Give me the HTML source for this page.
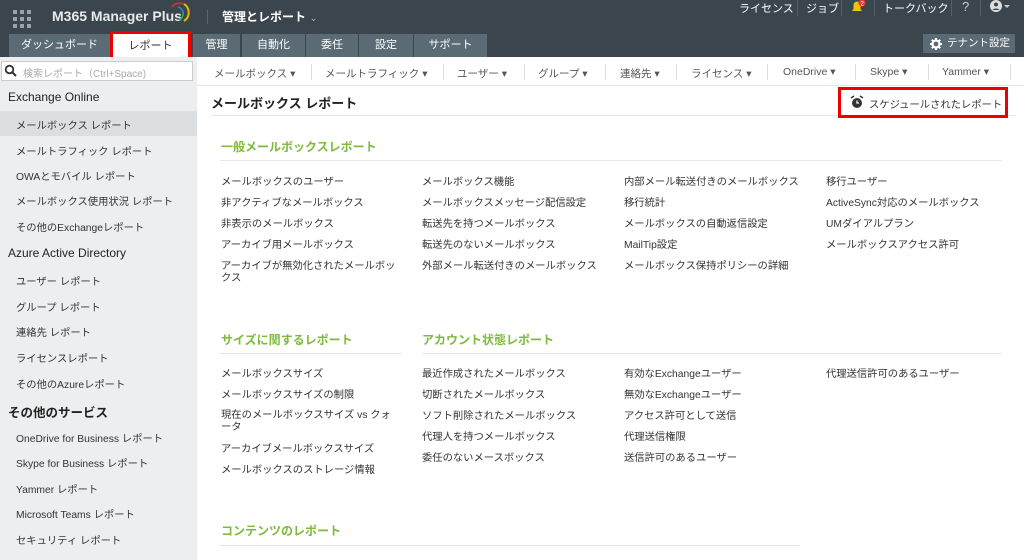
<!DOCTYPE html>
<html><head><meta charset="utf-8"><style>
*{margin:0;padding:0;box-sizing:border-box}
body{width:1024px;height:560px;overflow:hidden;background:#fff;font-family:"Liberation Sans","Noto Sans CJK JP",sans-serif;font-size:11px;color:#333;position:relative}
.a{position:absolute;white-space:nowrap}
#hdr{position:absolute;left:0;top:0;width:1024px;height:57px;background:#3b454d}
.tab{position:absolute;top:34px;height:23px;background:#5b6b75;color:#fff;font-size:11px;text-align:center;line-height:23px}
#side{position:absolute;left:0;top:57px;width:197px;height:503px;background:#eceeef}
.si{position:absolute;left:16px;font-size:10.3px;color:#333;white-space:nowrap}
.sh{position:absolute;left:8px;font-size:12px;color:#222;white-space:nowrap}
.nav{position:absolute;top:66px;font-size:10.5px;color:#555;white-space:nowrap}
.sep{position:absolute;top:64px;width:1px;height:16px;background:#ddd}
.g{position:absolute;font-size:12px;color:#7dbb3c;font-weight:bold;white-space:nowrap}
.l{position:absolute;font-size:10.3px;color:#333;white-space:nowrap;line-height:12px}
.hl{position:absolute;height:1px;background:#e6e6e6}
</style></head><body>
<div id="hdr"></div>
<svg class="a" style="left:13px;top:10px" width="20" height="20"><g fill="#9aa3a9"><rect x="0" y="0" width="4" height="4"/><rect x="7" y="0" width="4" height="4"/><rect x="14" y="0" width="4" height="4"/><rect x="0" y="7" width="4" height="4"/><rect x="7" y="7" width="4" height="4"/><rect x="14" y="7" width="4" height="4"/><rect x="0" y="14" width="4" height="4"/><rect x="7" y="14" width="4" height="4"/><rect x="14" y="14" width="4" height="4"/></g></svg>
<div class="a" style="left:52px;top:8px;color:#e8eaeb;font-size:14px;font-weight:bold">M365 Manager Plus</div>
<svg class="a" style="left:166px;top:1px" width="26" height="24"><path d="M6 6 A10 10 0 0 1 18 3" stroke="#c0392b" stroke-width="1.8" fill="none"/><path d="M18 3 A10 10 0 0 1 18 20" stroke="#e6b800" stroke-width="2" fill="none"/><path d="M12 6 A7 7 0 0 1 17 11" stroke="#2e86c1" stroke-width="1.5" fill="none"/><path d="M17 11 A7 7 0 0 1 13 19" stroke="#27ae60" stroke-width="1.5" fill="none"/></svg>
<div class="a" style="left:207px;top:10px;width:1px;height:14px;background:#5a656c"></div>
<div class="a" style="left:222px;top:8px;color:#fff;font-size:12px;font-weight:bold">管理とレポート <span style="font-weight:normal;color:#aaa;font-size:10px">⌄</span></div>
<div class="a" style="left:739px;top:0px;color:#fff;font-size:11px">ライセンス</div>
<div class="a" style="left:797px;top:0px;width:1px;height:16px;background:#555f66"></div>
<div class="a" style="left:806px;top:0px;color:#fff;font-size:11px">ジョブ</div>
<div class="a" style="left:841px;top:0px;width:1px;height:16px;background:#555f66"></div>
<svg class="a" style="left:850px;top:0px" width="18" height="14"><path d="M2 11 L3.5 9 V5 A3.5 3.5 0 0 1 10.5 5 V9 L12 11 Z" fill="#f2c200"/><circle cx="12" cy="3" r="3.5" fill="#e53935"/><text x="10.5" y="5.5" font-size="6" fill="#fff" font-family="Liberation Sans">2</text></svg>
<div class="a" style="left:874px;top:0px;width:1px;height:16px;background:#555f66"></div>
<div class="a" style="left:883px;top:0px;color:#fff;font-size:11px">トークバック</div>
<div class="a" style="left:951px;top:0px;width:1px;height:16px;background:#555f66"></div>
<div class="a" style="left:962px;top:-1px;color:#ccc;font-size:13px">?</div>
<div class="a" style="left:980px;top:0px;width:1px;height:16px;background:#555f66"></div>
<svg class="a" style="left:989px;top:0px" width="28" height="14"><circle cx="7" cy="6" r="6" fill="#ddd"/><circle cx="7" cy="4.5" r="2" fill="#3b454d"/><path d="M3.5 10 A4 3 0 0 1 10.5 10" fill="#3b454d"/><path d="M15 5 L21 5 L18 8 Z" fill="#ccc"/></svg>
<div class="tab" style="left:9px;width:101px">ダッシュボード</div>
<div class="a" style="left:110px;top:31px;width:81px;height:30px;background:#fff;border:3px solid #e00;text-align:center;line-height:24px;font-size:11px;color:#333">レポート</div>
<div class="tab" style="left:193px;width:47px">管理</div>
<div class="tab" style="left:242px;width:63px">自動化</div>
<div class="tab" style="left:306px;width:52px">委任</div>
<div class="tab" style="left:359px;width:54px">設定</div>
<div class="tab" style="left:414px;width:73px">サポート</div>
<div class="a" style="left:923px;top:34px;width:92px;height:19px;background:#5b6b75;color:#fff;font-size:10.5px;line-height:19px;padding-left:24px">テナント設定</div>
<svg class="a" style="left:930px;top:38px" width="12" height="12"><circle cx="6" cy="6" r="3.5" fill="none" stroke="#fff" stroke-width="2.2"/><g stroke="#fff" stroke-width="2"><path d="M6 0V2M6 10V12M0 6H2M10 6H12M1.8 1.8L3 3M9 9L10.2 10.2M1.8 10.2L3 9M9 3L10.2 1.8"/></g></svg>

<div id="side"></div>
<div class="a" style="left:1px;top:61px;width:192px;height:20px;background:#fff;border:1px solid #ccc"></div>
<svg class="a" style="left:4px;top:64px" width="14" height="14"><circle cx="5.5" cy="5.5" r="3.8" fill="none" stroke="#333" stroke-width="1.8"/><path d="M8 8L12 12" stroke="#333" stroke-width="2"/></svg>
<div class="a" style="left:23px;top:65px;color:#aaa;font-size:10px">検索レポート（Ctrl+Space)</div>
<div class="sh" style="top:90px">Exchange Online</div>
<div class="a" style="left:0;top:111px;width:197px;height:25px;background:#dcdfe1"></div>
<div class="si" style="top:117px">メールボックス レポート</div>
<div class="si" style="top:143px">メールトラフィック レポート</div>
<div class="si" style="top:168px">OWAとモバイル レポート</div>
<div class="si" style="top:193px">メールボックス使用状況 レポート</div>
<div class="si" style="top:219px">その他のExchangeレポート</div>
<div class="sh" style="top:246px">Azure Active Directory</div>
<div class="si" style="top:273px">ユーザー レポート</div>
<div class="si" style="top:299px">グループ レポート</div>
<div class="si" style="top:324px">連絡先 レポート</div>
<div class="si" style="top:350px">ライセンスレポート</div>
<div class="si" style="top:376px">その他のAzureレポート</div>
<div class="sh" style="top:402px;font-weight:bold;font-size:12.5px">その他のサービス</div>
<div class="si" style="top:430px">OneDrive for Business レポート</div>
<div class="si" style="top:455px">Skype for Business レポート</div>
<div class="si" style="top:481px">Yammer レポート</div>
<div class="si" style="top:506px">Microsoft Teams レポート</div>
<div class="si" style="top:532px">セキュリティ レポート</div>

<div class="hl" style="left:197px;top:85px;width:827px"></div>
<div class="nav" style="left:214px">メールボックス ▾</div><div class="sep" style="left:311px"></div>
<div class="nav" style="left:325px">メールトラフィック ▾</div><div class="sep" style="left:443px"></div>
<div class="nav" style="left:457px">ユーザー ▾</div><div class="sep" style="left:524px"></div>
<div class="nav" style="left:538px">グループ ▾</div><div class="sep" style="left:605px"></div>
<div class="nav" style="left:620px">連絡先 ▾</div><div class="sep" style="left:676px"></div>
<div class="nav" style="left:691px">ライセンス ▾</div><div class="sep" style="left:767px"></div>
<div class="nav" style="left:783px">OneDrive ▾</div><div class="sep" style="left:855px"></div>
<div class="nav" style="left:870px">Skype ▾</div><div class="sep" style="left:928px"></div>
<div class="nav" style="left:942px">Yammer ▾</div><div class="sep" style="left:1010px"></div>

<div class="a" style="left:211px;top:93px;font-size:13px;font-weight:bold;color:#222">メールボックス レポート</div>
<div class="hl" style="left:211px;top:115px;width:805px"></div>
<div class="a" style="left:838px;top:87px;width:170px;height:31px;border:3px solid #e00;background:#fff"></div>
<svg class="a" style="left:850px;top:95px" width="14" height="14"><circle cx="7" cy="8" r="5" fill="#333"/><path d="M1 3L4 1M13 3L10 1" stroke="#333" stroke-width="1.5"/><path d="M7 5.5V8H9" stroke="#fff" stroke-width="1.2" fill="none"/></svg>
<div class="a" style="left:869px;top:96px;font-size:10.3px;color:#333">スケジュールされたレポート</div>

<div class="g" style="left:221px;top:138px">一般メールボックスレポート</div>
<div class="hl" style="left:220px;top:160px;width:782px"></div>
<div class="l" style="left:221px;top:177px">メールボックスのユーザー</div>
<div class="l" style="left:221px;top:198px">非アクティブなメールボックス</div>
<div class="l" style="left:221px;top:219px">非表示のメールボックス</div>
<div class="l" style="left:221px;top:240px">アーカイブ用メールボックス</div>
<div class="l" style="left:221px;top:261px">アーカイブが無効化されたメールボッ<br>クス</div>
<div class="l" style="left:422px;top:177px">メールボックス機能</div>
<div class="l" style="left:422px;top:198px">メールボックスメッセージ配信設定</div>
<div class="l" style="left:422px;top:219px">転送先を持つメールボックス</div>
<div class="l" style="left:422px;top:240px">転送先のないメールボックス</div>
<div class="l" style="left:422px;top:261px">外部メール転送付きのメールボックス</div>
<div class="l" style="left:624px;top:177px">内部メール転送付きのメールボックス</div>
<div class="l" style="left:624px;top:198px">移行統計</div>
<div class="l" style="left:624px;top:219px">メールボックスの自動返信設定</div>
<div class="l" style="left:624px;top:240px">MailTip設定</div>
<div class="l" style="left:624px;top:261px">メールボックス保持ポリシーの詳細</div>
<div class="l" style="left:826px;top:177px">移行ユーザー</div>
<div class="l" style="left:826px;top:198px">ActiveSync対応のメールボックス</div>
<div class="l" style="left:826px;top:219px">UMダイアルプラン</div>
<div class="l" style="left:826px;top:240px">メールボックスアクセス許可</div>

<div class="g" style="left:221px;top:331px">サイズに関するレポート</div>
<div class="hl" style="left:220px;top:353px;width:182px"></div>
<div class="g" style="left:422px;top:331px">アカウント状態レポート</div>
<div class="hl" style="left:422px;top:353px;width:580px"></div>
<div class="l" style="left:221px;top:369px">メールボックスサイズ</div>
<div class="l" style="left:221px;top:390px">メールボックスサイズの制限</div>
<div class="l" style="left:221px;top:410px">現在のメールボックスサイズ vs クォ<br>ータ</div>
<div class="l" style="left:221px;top:444px">アーカイブメールボックスサイズ</div>
<div class="l" style="left:221px;top:465px">メールボックスのストレージ情報</div>
<div class="l" style="left:422px;top:369px">最近作成されたメールボックス</div>
<div class="l" style="left:422px;top:390px">切断されたメールボックス</div>
<div class="l" style="left:422px;top:411px">ソフト削除されたメールボックス</div>
<div class="l" style="left:422px;top:432px">代理人を持つメールボックス</div>
<div class="l" style="left:422px;top:453px">委任のないメースボックス</div>
<div class="l" style="left:624px;top:369px">有効なExchangeユーザー</div>
<div class="l" style="left:624px;top:390px">無効なExchangeユーザー</div>
<div class="l" style="left:624px;top:411px">アクセス許可として送信</div>
<div class="l" style="left:624px;top:432px">代理送信権限</div>
<div class="l" style="left:624px;top:453px">送信許可のあるユーザー</div>
<div class="l" style="left:826px;top:369px">代理送信許可のあるユーザー</div>

<div class="g" style="left:221px;top:522px">コンテンツのレポート</div>
<div class="hl" style="left:220px;top:545px;width:580px"></div>
</body></html>
